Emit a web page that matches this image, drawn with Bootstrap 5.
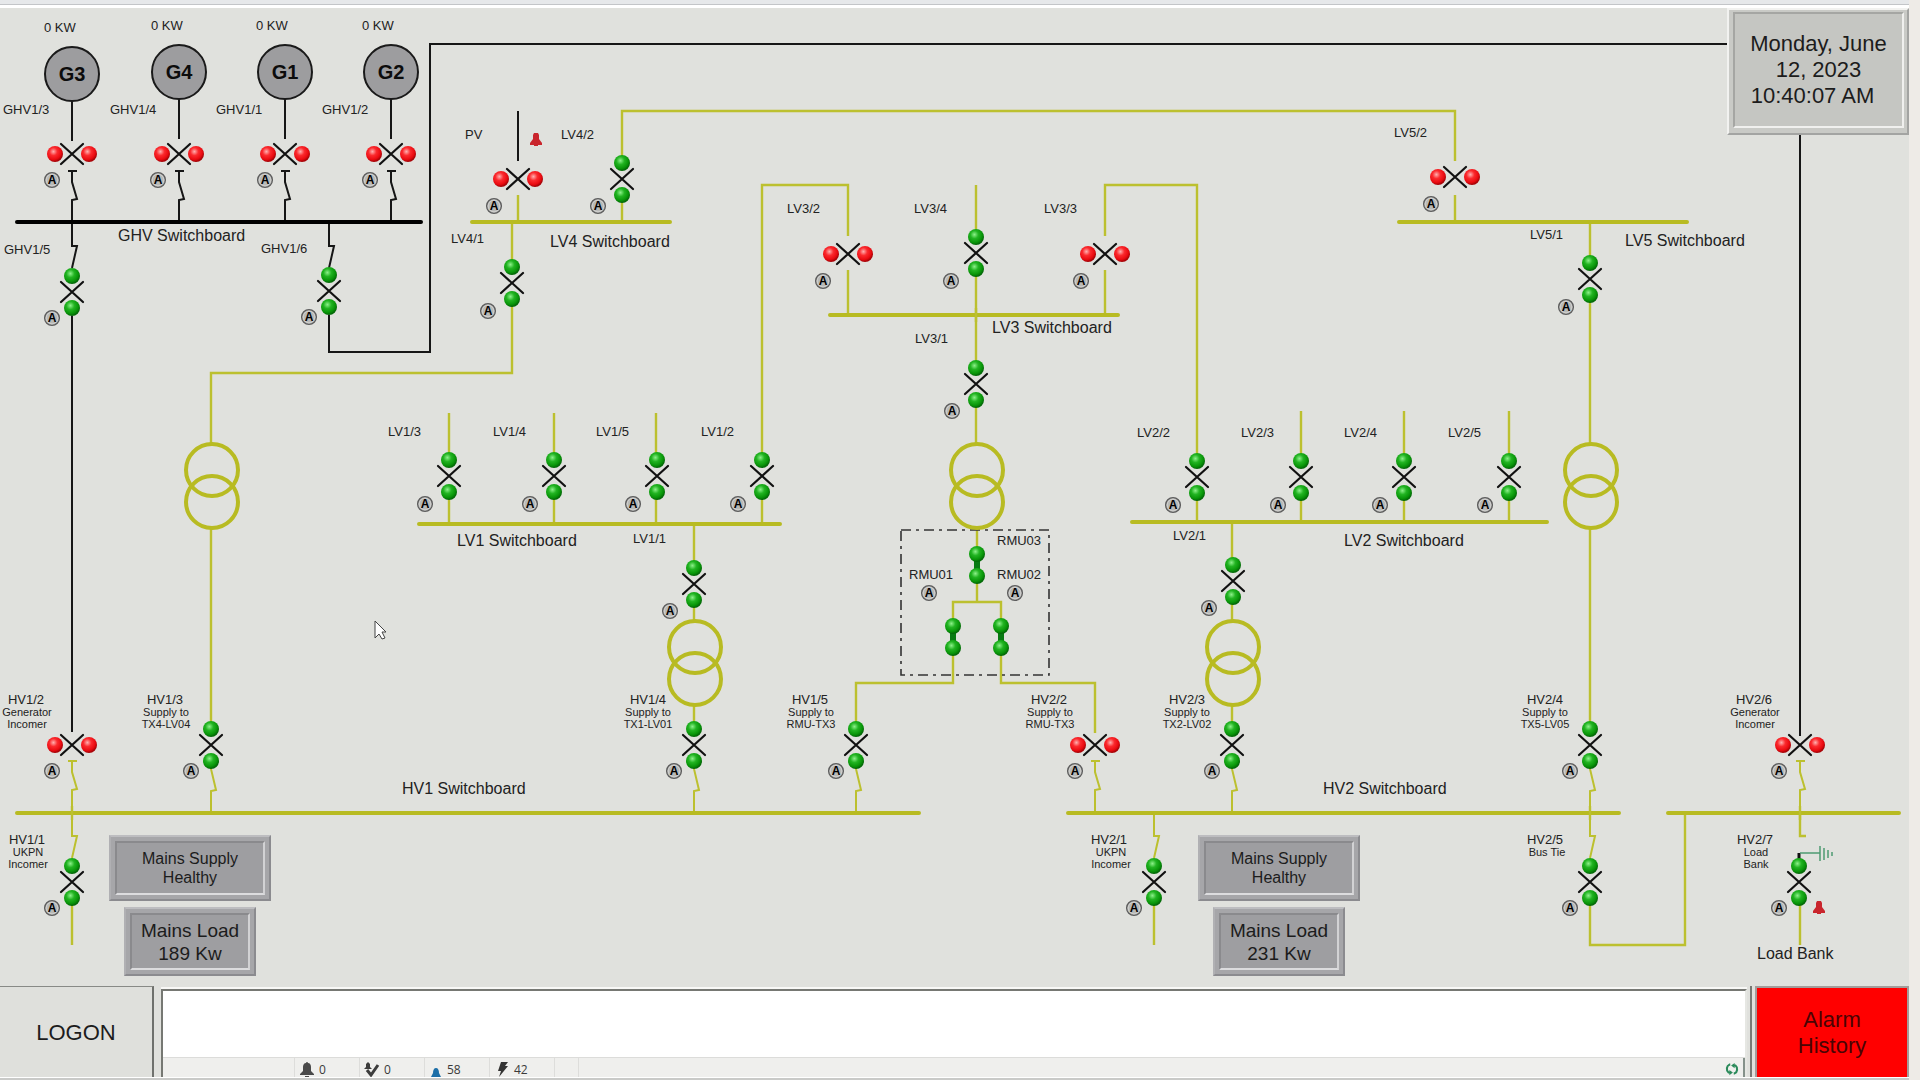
<!DOCTYPE html>
<html lang="en">
<head>
<meta charset="utf-8">
<meta name="viewport" content="width=device-width, initial-scale=1">
<title>Switchboard overview</title>
<link rel="stylesheet" href="https://cdn.jsdelivr.net/npm/bootstrap@5.3.0/dist/css/bootstrap.min.css">
<style>
  body { font-family: "Liberation Sans", Arial, sans-serif; background: #eeebe7; color: #1c1c1c; padding-right: 11px; }
  .top-strip { height: 8px; background: #e6e8ea; border-bottom: 3px solid #fff; box-shadow: inset 0 -1px #c3c5c8; }
  .plant { background: #e0e1dd; }
  .wire { fill: none; stroke: #bcc02f; stroke-width: 2.4; }
  .wire-dead { fill: none; stroke: #161616; stroke-width: 2; }
  .bus { stroke: #b8bb22; stroke-width: 4; stroke-linecap: round; }
  .bus-dead { stroke: #000; stroke-width: 4; stroke-linecap: round; }
  .thin { stroke-width: 2; }
  .earth { fill: none; stroke: #4e9a72; stroke-width: 1.5; }
  .zone { fill: none; stroke: #333; stroke-width: 1.6; stroke-dasharray: 10 5 3 5; }
  .gen { fill: #9d9d9f; stroke: #1a1a1a; stroke-width: 2; }
  .gen-name { font-size: 20px; font-weight: 700; text-anchor: middle; fill: #0c0c0c; }
  .tag { font-size: 13px; fill: #222; }
  .board { font-size: 16px; fill: #222; }
  .note { font-size: 11px; fill: #222; }
  .mid { text-anchor: middle; }
  .mode-letter { font-size: 12px; font-weight: 700; text-anchor: middle; fill: #000; }

  .bevel { border: 2px solid; border-color: #bdbdc0 #8b8b8f #8b8b8f #b0b0b3; background: #a6a6a9; padding: 4px; }
  .bevel-in { border: 2px solid; border-color: #8a8a8d #d2d2d4 #dcdcde #8a8a8d; background: #9e9ea1; line-height: 19px; font-size: 16px; }
  .bevel-in.load { font-size: 19px; line-height: 23px; }
  .bevel.clock { background: #c9cac6; border-color: #f2f2f0 #a3a4a2 #a3a4a2 #f2f2f0; padding: 2px 3px 5px 4px; }
  .bevel.clock .bevel-in { background: #c5c6c2; border-color: #a5a6a3 #f0f0ee #f0f0ee #a5a6a3; font-size: 22px; line-height: 26px; }

  .dock { height: 94px; background: #e0e1dd; border-bottom: 2px solid #c9cac8; box-shadow: inset 0 -1px #fff; padding-bottom: 1px; }
  .logon, .history { width: 154px; font-size: 22px; line-height: 26px; color: #1c1c1c; }
  .logon { background: #dfe0dc; border: 0 solid #6f716d; border-top: 1px solid #888a86; border-right-width: 2px; padding-top: 3px; }
  .history { background: #f00; color: #4a0404; border: 2px solid #a39c9a; border-bottom: 0; }
  .alarms { margin: 3px 3px 0 7px; background: #fff; border: 2px solid #767873; border-right-color: #e6e7e3; border-bottom: 0; box-shadow: 0 -2px #f8f8f6; }
  .rail { width: 2px; background: #777975; margin-right: 3px; }
  .status { height: 20px; background: #efefed; border-top: 1px solid #dcdcda; font: 12px/24px "Open Sans", sans-serif; color: #3a3a3a; overflow: hidden; }
  .cell { width: 65px; border-left: 1px solid #dddddb; }
  .cell-first { width: 131px; }
  .cell-narrow { width: 24px; }
  .refresh { border-right: 2px solid #85918a; }
</style>
</head>
<body>
<div class="d-flex flex-column min-vh-100">
  <header class="top-strip"></header>

  <main class="plant flex-grow-1">
  <svg class="d-block w-100" viewBox="0 8 1909 978" role="img" aria-label="High and low voltage switchboard diagram">
    <defs>
      <radialGradient id="greenBall" cx="40%" cy="35%" r="62%"><stop offset="0" stop-color="#8df08a"/><stop offset=".4" stop-color="#22b422"/><stop offset=".8" stop-color="#089408"/><stop offset="1" stop-color="#046a08"/></radialGradient>
      <radialGradient id="redBall" cx="40%" cy="35%" r="62%"><stop offset="0" stop-color="#ffb0b0"/><stop offset=".4" stop-color="#fb2a2e"/><stop offset=".8" stop-color="#e90a10"/><stop offset="1" stop-color="#a80408"/></radialGradient>
      <path id="cross" d="M-11-10L11 10M11-10L-11 10" stroke="#111" stroke-width="2.2" stroke-linecap="round"/>
      <g id="closed"><rect x="-3" y="-12" width="6" height="24" fill="#e0e1dd"/><circle cy="-16" r="8" fill="url(#greenBall)"/><circle cy="16" r="8" fill="url(#greenBall)"/><use href="#cross"/></g>
      <g id="open"><circle cx="-17" r="8" fill="url(#redBall)"/><circle cx="17" r="8" fill="url(#redBall)"/><use href="#cross"/></g>
      <g id="link"><path d="M0-11V11" stroke="#087a12" stroke-width="6"/><circle cy="-11" r="8" fill="url(#greenBall)"/><circle cy="11" r="8" fill="url(#greenBall)"/></g>
      <g id="mode"><circle r="7.4" fill="#b9bab8" stroke="#5c5c5c" stroke-width="1.3"/><circle r="5.8" fill="none" stroke="#d0d0ce"/><text class="mode-letter" y="4">A</text></g>
      <g id="xfmr" fill="none" stroke="#b8bb22" stroke-width="4"><circle cy="-16" r="26"/><circle cy="16" r="26"/></g>
      <g id="bell" fill="#c9252c"><path d="M-2-6h4l1 2v4l3 4v2H2v1h-4v-1H-6v-2l3-4v-4z"/></g>
      <path id="isoDown" d="M0 0V6L5 27L0 28V51"/>
      <path id="isoTee" d="M-4-8H5M0-8V3L5 20L0 21V44"/>
      <path id="isoUp" d="M0-45V-22H5L0 0"/>
    </defs>

    <!-- Generator side, de-energised -->
    <g class="wire-dead">
      <path d="M72 101V141M179 99V139M285 99V139M391 99V139"/>
      <use href="#isoTee" x="72" y="179"/><use href="#isoTee" x="179" y="179"/><use href="#isoTee" x="285" y="179"/><use href="#isoTee" x="391" y="179"/>
      <use href="#isoUp" x="72" y="268"/><use href="#isoUp" x="329" y="268"/>
      <path d="M72 316V732M329 315V352H430V44H1727M1800 134V736M518 111V161"/>
    </g>
    <path class="bus-dead" d="M17 222H421"/>

    <!-- Live conductors -->
    <g class="wire">
      <path d="M518 195V222M622 222V111H1455V161M1455 195V222M512 222V373H211V445M211 526V724"/>
      <path d="M762 524V185H848V236M848 270V315M976 185V445M1105 315V270M1105 236V185H1197V522"/>
      <path d="M449 413V524M554 413V524M656 413V524M694 524V622M694 704V724"/>
      <path d="M1301 411V522M1404 411V522M1509 411V522M1232 522V622M1232 704V724"/>
      <path d="M1590 222V445M1590 528V724"/>
      <path d="M977 530V602M953 626V602H1001V626M953 648V683H856V724M1001 648V683H1095V733"/>
      <path d="M72 900V945M1154 900V945M1590 900V945H1685V813M1800 900V945"/>
      <path d="M1800 813V836H1806"/>
    </g>
    <g class="wire thin">
      <use href="#isoTee" x="72" y="769"/><use href="#isoTee" x="1095" y="769"/><use href="#isoTee" x="1800" y="769"/>
      <use href="#isoDown" x="211" y="763"/><use href="#isoDown" x="694" y="763"/><use href="#isoDown" x="856" y="763"/><use href="#isoDown" x="1232" y="763"/><use href="#isoDown" x="1590" y="763"/>
      <use href="#isoUp" x="72" y="858"/><use href="#isoUp" x="1154" y="858"/><use href="#isoUp" x="1590" y="858"/>
    </g>
    <path class="bus" d="M472 222H670M1399 222H1687M830 315H1118M419 524H780M1132 522H1547M17 813H919M1068 813H1619M1668 813H1899"/>
    <path class="wire" d="M72 806V820M976 308V322M1590 806V820M1800 806V820"/>
    <path d="M1799 853V860" stroke="#111" stroke-width="3"/>
    <path class="earth" d="M1800 853H1820M1820 846V861M1824 848V860M1828 850V858M1832 852V856"/>
    <rect class="zone" x="901" y="530" width="148" height="145"/>

    <!-- Transformers -->
    <use href="#xfmr" x="212" y="486"/><use href="#xfmr" x="977" y="486"/><use href="#xfmr" x="1591" y="486"/>
    <use href="#xfmr" x="695" y="663"/><use href="#xfmr" x="1233" y="663"/>

    <!-- Generators -->
    <circle class="gen" cx="72" cy="74" r="27"/><circle class="gen" cx="179" cy="72" r="27"/><circle class="gen" cx="285" cy="72" r="27"/><circle class="gen" cx="391" cy="72" r="27"/>
    <text class="gen-name" x="72" y="81">G3</text><text class="gen-name" x="179" y="79">G4</text><text class="gen-name" x="285" y="79">G1</text><text class="gen-name" x="391" y="79">G2</text>

    <!-- Open breakers -->
    <use href="#open" x="72" y="154"/><use href="#open" x="179" y="154"/><use href="#open" x="285" y="154"/><use href="#open" x="391" y="154"/>
    <use href="#open" x="518" y="179"/><use href="#open" x="1455" y="177"/><use href="#open" x="848" y="254"/><use href="#open" x="1105" y="254"/>
    <use href="#open" x="72" y="745"/><use href="#open" x="1095" y="745"/><use href="#open" x="1800" y="745"/>

    <!-- Closed breakers -->
    <use href="#closed" x="72" y="292"/><use href="#closed" x="329" y="291"/>
    <use href="#closed" x="622" y="179"/><use href="#closed" x="512" y="283"/><use href="#closed" x="976" y="253"/><use href="#closed" x="976" y="384"/><use href="#closed" x="1590" y="279"/>
    <use href="#closed" x="449" y="476"/><use href="#closed" x="554" y="476"/><use href="#closed" x="657" y="476"/><use href="#closed" x="762" y="476"/>
    <use href="#closed" x="1197" y="477"/><use href="#closed" x="1301" y="477"/><use href="#closed" x="1404" y="477"/><use href="#closed" x="1509" y="477"/>
    <use href="#closed" x="694" y="584"/><use href="#closed" x="1233" y="581"/>
    <use href="#closed" x="211" y="745"/><use href="#closed" x="694" y="745"/><use href="#closed" x="856" y="745"/><use href="#closed" x="1232" y="745"/><use href="#closed" x="1590" y="745"/>
    <use href="#closed" x="72" y="882"/><use href="#closed" x="1154" y="882"/><use href="#closed" x="1590" y="882"/><use href="#closed" x="1799" y="882"/>
    <use href="#link" x="977" y="565"/><use href="#link" x="953" y="637"/><use href="#link" x="1001" y="637"/>

    <!-- Auto mode markers -->
    <use href="#mode" x="52" y="180"/><use href="#mode" x="158" y="180"/><use href="#mode" x="265" y="180"/><use href="#mode" x="370" y="180"/>
    <use href="#mode" x="52" y="318"/><use href="#mode" x="309" y="317"/><use href="#mode" x="494" y="206"/><use href="#mode" x="598" y="206"/><use href="#mode" x="488" y="311"/>
    <use href="#mode" x="823" y="281"/><use href="#mode" x="951" y="281"/><use href="#mode" x="1081" y="281"/><use href="#mode" x="952" y="411"/>
    <use href="#mode" x="1431" y="204"/><use href="#mode" x="1566" y="307"/>
    <use href="#mode" x="425" y="504"/><use href="#mode" x="530" y="504"/><use href="#mode" x="633" y="504"/><use href="#mode" x="738" y="504"/><use href="#mode" x="670" y="611"/>
    <use href="#mode" x="1173" y="505"/><use href="#mode" x="1278" y="505"/><use href="#mode" x="1380" y="505"/><use href="#mode" x="1485" y="505"/><use href="#mode" x="1209" y="608"/>
    <use href="#mode" x="929" y="593"/><use href="#mode" x="1015" y="593"/>
    <use href="#mode" x="52" y="771"/><use href="#mode" x="191" y="771"/><use href="#mode" x="674" y="771"/><use href="#mode" x="836" y="771"/><use href="#mode" x="1075" y="771"/><use href="#mode" x="1212" y="771"/><use href="#mode" x="1570" y="771"/><use href="#mode" x="1779" y="771"/>
    <use href="#mode" x="52" y="908"/><use href="#mode" x="1134" y="908"/><use href="#mode" x="1570" y="908"/><use href="#mode" x="1779" y="908"/>
    <use href="#bell" x="536" y="139"/><use href="#bell" x="1819" y="907"/>

    <!-- Tags -->
    <g class="tag">
      <text x="44" y="32">0 KW</text><text x="151" y="30">0 KW</text><text x="256" y="30">0 KW</text><text x="362" y="30">0 KW</text>
      <text x="3" y="114">GHV1/3</text><text x="110" y="114">GHV1/4</text><text x="216" y="114">GHV1/1</text><text x="322" y="114">GHV1/2</text>
      <text x="4" y="254">GHV1/5</text><text x="261" y="253">GHV1/6</text>
      <text x="465" y="139">PV</text><text x="561" y="139">LV4/2</text><text x="451" y="243">LV4/1</text>
      <text x="787" y="213">LV3/2</text><text x="914" y="213">LV3/4</text><text x="1044" y="213">LV3/3</text><text x="915" y="343">LV3/1</text>
      <text x="1394" y="137">LV5/2</text><text x="1530" y="239">LV5/1</text>
      <text x="388" y="436">LV1/3</text><text x="493" y="436">LV1/4</text><text x="596" y="436">LV1/5</text><text x="701" y="436">LV1/2</text><text x="633" y="543">LV1/1</text>
      <text x="1137" y="437">LV2/2</text><text x="1241" y="437">LV2/3</text><text x="1344" y="437">LV2/4</text><text x="1448" y="437">LV2/5</text><text x="1173" y="540">LV2/1</text>
      <text x="997" y="545">RMU03</text><text x="909" y="579">RMU01</text><text x="997" y="579">RMU02</text>
    </g>
    <g class="tag mid">
      <text x="26" y="704">HV1/2</text><text x="165" y="704">HV1/3</text><text x="648" y="704">HV1/4</text><text x="810" y="704">HV1/5</text><text x="1049" y="704">HV2/2</text><text x="1187" y="704">HV2/3</text><text x="1545" y="704">HV2/4</text><text x="1754" y="704">HV2/6</text>
      <text x="27" y="844">HV1/1</text><text x="1109" y="844">HV2/1</text><text x="1545" y="844">HV2/5</text><text x="1755" y="844">HV2/7</text>
    </g>
    <g class="note mid">
      <text x="27" y="716">Generator</text><text x="27" y="728">Incomer</text>
      <text x="166" y="716">Supply to</text><text x="166" y="728">TX4-LV04</text>
      <text x="648" y="716">Supply to</text><text x="648" y="728">TX1-LV01</text>
      <text x="811" y="716">Supply to</text><text x="811" y="728">RMU-TX3</text>
      <text x="1050" y="716">Supply to</text><text x="1050" y="728">RMU-TX3</text>
      <text x="1187" y="716">Supply to</text><text x="1187" y="728">TX2-LV02</text>
      <text x="1545" y="716">Supply to</text><text x="1545" y="728">TX5-LV05</text>
      <text x="1755" y="716">Generator</text><text x="1755" y="728">Incomer</text>
      <text x="28" y="856">UKPN</text><text x="28" y="868">Incomer</text>
      <text x="1111" y="856">UKPN</text><text x="1111" y="868">Incomer</text>
      <text x="1547" y="856">Bus Tie</text><text x="1756" y="856">Load</text><text x="1756" y="868">Bank</text>
    </g>
    <g class="board">
      <text x="118" y="241">GHV Switchboard</text><text x="550" y="247">LV4 Switchboard</text><text x="992" y="333">LV3 Switchboard</text><text x="1625" y="246">LV5 Switchboard</text>
      <text x="457" y="546">LV1 Switchboard</text><text x="1344" y="546">LV2 Switchboard</text><text x="402" y="794">HV1 Switchboard</text><text x="1323" y="794">HV2 Switchboard</text>
      <text x="1757" y="959">Load Bank</text>
    </g>

    <!-- Readout panels -->
    <foreignObject x="1727" y="8" width="182" height="127">
      <div class="bevel clock h-100"><div class="bevel-in h-100 d-flex flex-column align-items-center justify-content-center"><div>Monday, June</div><div>12, 2023</div><div class="pe-2 me-1">10:40:07 AM</div></div></div>
    </foreignObject>
    <foreignObject x="109" y="835" width="162" height="66">
      <div class="bevel h-100"><div class="bevel-in h-100 d-flex align-items-center justify-content-center text-center">Mains Supply<br>Healthy</div></div>
    </foreignObject>
    <foreignObject x="124" y="907" width="132" height="69">
      <div class="bevel h-100"><div class="bevel-in load h-100 d-flex align-items-center justify-content-center text-center">Mains Load<br>189 Kw</div></div>
    </foreignObject>
    <foreignObject x="1198" y="835" width="162" height="66">
      <div class="bevel h-100"><div class="bevel-in h-100 d-flex align-items-center justify-content-center text-center">Mains Supply<br>Healthy</div></div>
    </foreignObject>
    <foreignObject x="1213" y="907" width="132" height="69">
      <div class="bevel h-100"><div class="bevel-in load h-100 d-flex align-items-center justify-content-center text-center">Mains Load<br>231 Kw</div></div>
    </foreignObject>

    <!-- Pointer -->
    <path d="M375 621V638L379 634L382 639L385 638L382 632H386Z" fill="#fff" stroke="#444"/>
  </svg>
  </main>

  <footer class="dock d-flex">
    <button type="button" class="logon flex-shrink-0">LOGON</button>
    <section class="alarms flex-grow-1 d-flex flex-column" aria-label="Alarm banner">
      <div class="flex-grow-1"></div>
      <div class="status d-flex">
        <div class="cell-first"></div>
        <div class="cell d-flex ps-1">
          <svg class="mt-1 me-1" width="16" height="16" viewBox="0 0 16 16" aria-hidden="true"><path d="M8 0c-1 0-1 1-1 1-2 0-3 2-3 4v4l-3 3v1h14v-1l-3-3V5c0-2-1-4-3-4 0 0 0-1-1-1zM6 14h4v2H6z" fill="#4a4a4a"/></svg>
          <span>0</span>
        </div>
        <div class="cell d-flex ps-1">
          <svg class="mt-1 me-1" width="16" height="16" viewBox="0 0 16 16" aria-hidden="true"><path d="M4 0l2 2v3l2 2H0l2-2V2z" fill="#3c3c3c"/><path d="M3 8l4 5L14 3" fill="none" stroke="#3c3c3c" stroke-width="3"/></svg>
          <span>0</span>
        </div>
        <div class="cell d-flex ps-1">
          <svg width="18" height="20" viewBox="0 0 18 20" aria-hidden="true"><path d="M7 10c-2 0-3 2-3 5l-2 4h10l-2-4c0-3-1-5-3-5z" fill="#1d6fa8"/></svg>
          <span>58</span>
        </div>
        <div class="cell d-flex ps-1">
          <svg class="mt-1 me-1" width="16" height="16" viewBox="0 0 16 16" aria-hidden="true"><path d="M7 0h7l-3 4h3L5 15l2-6H4z" fill="#333"/></svg>
          <span>42</span>
        </div>
        <div class="cell cell-narrow"></div>
        <div class="cell cell-narrow flex-grow-1"></div>
        <div class="refresh d-flex pt-1 pe-1">
          <svg width="14" height="14" viewBox="0 0 16 14" aria-hidden="true"><g fill="none" stroke="#2a8a5a" stroke-width="2.4"><path d="M6 2H5a4 5 0 0 0-1 9h2M10 12h1a4 5 0 0 0 1-9h-2"/></g><path d="M5 8l4 3-4 3zM11 0L7 3l4 3z" fill="#2a8a5a"/></svg>
        </div>
      </div>
    </section>
    <div class="rail"></div>
    <button type="button" class="history flex-shrink-0">Alarm<br>History</button>
  </footer>
</div>
<script src="https://cdn.jsdelivr.net/npm/bootstrap@5.3.0/dist/js/bootstrap.bundle.min.js"></script>
</body>
</html>
